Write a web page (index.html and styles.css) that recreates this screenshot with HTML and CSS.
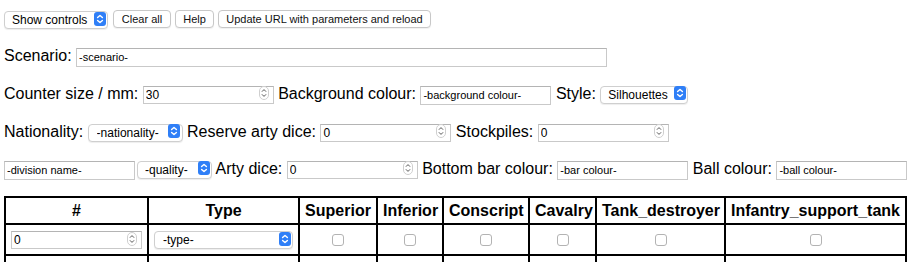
FILE: index.html
```html
<!DOCTYPE html>
<html lang="en">
<head>
    <meta charset="UTF-8">
    <title>Counters</title>
    <link rel="stylesheet" href="styles.css">
</head>
<body>
    <div class="toolbar">
        <span class="sel sel-show">
            <select><option>Show controls</option></select>
            <svg class="sel-icon" viewBox="0 0 12 14"><rect width="12" height="14" rx="3" fill="#2f7ff7"/><path d="M3.6 5.6 6 3.4 8.4 5.6M3.6 8.4 6 10.6 8.4 8.4" fill="none" stroke="#fff" stroke-width="1.4" stroke-linecap="round" stroke-linejoin="round"/></svg>
        </span>
        <button class="btn btn-clear">Clear all</button>
        <button class="btn btn-help">Help</button>
        <button class="btn btn-update">Update URL with parameters and reload</button>
    </div>

    <div class="row">Scenario: <input class="txt txt-scenario" type="text" value="-scenario-"></div>

    <div class="row">Counter size / mm: <span class="num"><input type="number" value="30"><svg class="spin" viewBox="0 0 10 14"><rect x="0.5" y="0.5" width="9" height="13" rx="4.5" fill="#fff" stroke="#cfcfcf"/><path d="M3.2 5.4 5 3.6 6.8 5.4M3.2 8.6 5 10.4 6.8 8.6" fill="none" stroke="#555" stroke-width="1" stroke-linecap="round" stroke-linejoin="round"/></svg></span> Background colour: <input class="txt" type="text" value="-background colour-"> Style: <span class="sel sel-style">
            <select><option>Silhouettes</option></select>
            <svg class="sel-icon" viewBox="0 0 12 14"><rect width="12" height="14" rx="3" fill="#2f7ff7"/><path d="M3.6 5.6 6 3.4 8.4 5.6M3.6 8.4 6 10.6 8.4 8.4" fill="none" stroke="#fff" stroke-width="1.4" stroke-linecap="round" stroke-linejoin="round"/></svg>
        </span></div>

    <div class="row">Nationality: <span class="sel sel-nat">
            <select><option>-nationality-</option></select>
            <svg class="sel-icon" viewBox="0 0 12 14"><rect width="12" height="14" rx="3" fill="#2f7ff7"/><path d="M3.6 5.6 6 3.4 8.4 5.6M3.6 8.4 6 10.6 8.4 8.4" fill="none" stroke="#fff" stroke-width="1.4" stroke-linecap="round" stroke-linejoin="round"/></svg>
        </span> Reserve arty dice: <span class="num"><input type="number" value="0"><svg class="spin" viewBox="0 0 10 14"><rect x="0.5" y="0.5" width="9" height="13" rx="4.5" fill="#fff" stroke="#cfcfcf"/><path d="M3.2 5.4 5 3.6 6.8 5.4M3.2 8.6 5 10.4 6.8 8.6" fill="none" stroke="#555" stroke-width="1" stroke-linecap="round" stroke-linejoin="round"/></svg></span> Stockpiles: <span class="num"><input type="number" value="0"><svg class="spin" viewBox="0 0 10 14"><rect x="0.5" y="0.5" width="9" height="13" rx="4.5" fill="#fff" stroke="#cfcfcf"/><path d="M3.2 5.4 5 3.6 6.8 5.4M3.2 8.6 5 10.4 6.8 8.6" fill="none" stroke="#555" stroke-width="1" stroke-linecap="round" stroke-linejoin="round"/></svg></span></div>

    <div class="row"><input class="txt txt-division" type="text" value="-division name-"><span class="sel sel-quality">
            <select><option>-quality-</option></select>
            <svg class="sel-icon" viewBox="0 0 12 14"><rect width="12" height="14" rx="3" fill="#2f7ff7"/><path d="M3.6 5.6 6 3.4 8.4 5.6M3.6 8.4 6 10.6 8.4 8.4" fill="none" stroke="#fff" stroke-width="1.4" stroke-linecap="round" stroke-linejoin="round"/></svg>
        </span> Arty dice: <span class="num"><input type="number" value="0"><svg class="spin" viewBox="0 0 10 14"><rect x="0.5" y="0.5" width="9" height="13" rx="4.5" fill="#fff" stroke="#cfcfcf"/><path d="M3.2 5.4 5 3.6 6.8 5.4M3.2 8.6 5 10.4 6.8 8.6" fill="none" stroke="#555" stroke-width="1" stroke-linecap="round" stroke-linejoin="round"/></svg></span> Bottom bar colour: <input class="txt" type="text" value="-bar colour-"> Ball colour: <input class="txt" type="text" value="-ball colour-"></div>

    <table class="units">
        <colgroup>
            <col style="width: 143px">
            <col style="width: 151px">
            <col style="width: 78px">
            <col style="width: 66px">
            <col style="width: 86px">
            <col style="width: 67px">
            <col style="width: 129px">
            <col style="width: 181px">
        </colgroup>
        <tr>
            <th>#</th>
            <th>Type</th>
            <th>Superior</th>
            <th>Inferior</th>
            <th>Conscript</th>
            <th>Cavalry</th>
            <th>Tank_destroyer</th>
            <th>Infantry_support_tank</th>
        </tr>
        <tr>
            <td><span class="num"><input type="number" value="0"><svg class="spin" viewBox="0 0 10 14"><rect x="0.5" y="0.5" width="9" height="13" rx="4.5" fill="#fff" stroke="#cfcfcf"/><path d="M3.2 5.4 5 3.6 6.8 5.4M3.2 8.6 5 10.4 6.8 8.6" fill="none" stroke="#555" stroke-width="1" stroke-linecap="round" stroke-linejoin="round"/></svg></span></td>
            <td><span class="sel sel-type">
                <select><option>-type-</option></select>
                <svg class="sel-icon" viewBox="0 0 12 14"><rect width="12" height="14" rx="3" fill="#2f7ff7"/><path d="M3.6 5.6 6 3.4 8.4 5.6M3.6 8.4 6 10.6 8.4 8.4" fill="none" stroke="#fff" stroke-width="1.4" stroke-linecap="round" stroke-linejoin="round"/></svg>
            </span></td>
            <td><input class="chk" type="checkbox"></td>
            <td><input class="chk" type="checkbox"></td>
            <td><input class="chk" type="checkbox"></td>
            <td><input class="chk" type="checkbox"></td>
            <td><input class="chk" type="checkbox"></td>
            <td><input class="chk" type="checkbox"></td>
        </tr>
        <tr>
            <td>&nbsp;</td>
            <td>&nbsp;</td>
            <td>&nbsp;</td>
            <td>&nbsp;</td>
            <td>&nbsp;</td>
            <td>&nbsp;</td>
            <td>&nbsp;</td>
            <td>&nbsp;</td>
        </tr>
    </table>
</body>
</html>
```

FILE: styles.css
```css
body {
    margin: 0;
    padding: 10px 4px 0 4px;
    font-family: "Liberation Sans", Arial, Helvetica, sans-serif;
    font-size: 16px;
    color: #000;
    background: #fff;
}

/* top buttons */
.toolbar {
    display: flex;
    gap: 4px;
    height: 18px;
    margin-bottom: 18px;
}

.btn {
    height: 18px;
    padding: 0;
    font-family: "Liberation Sans", Arial, sans-serif;
    font-size: 11px;
    color: #111;
    background: #fff;
    border: 1px solid #c8c8c8;
    border-radius: 4px;
    box-shadow: 0 1px 1px rgba(0, 0, 0, 0.06);
}
.btn-clear { width: 58px; margin-left: 1px; }
.btn-help { width: 39px; }
.btn-update { width: 213px; }

/* rows of fields */
.row {
    height: 19px;
    line-height: 19px;
    margin-bottom: 19px;
    white-space: nowrap;
}
.row:nth-of-type(5) { margin-top: -1px; margin-bottom: 18px; }

.txt {
    box-sizing: border-box;
    width: 131px;
    height: 19px;
    padding: 0 2px;
    margin: 0;
    font-family: "Liberation Sans", Arial, sans-serif;
    font-size: 11px;
    color: #000;
    border: 1px solid #c9c9c9;
    border-top-color: #b4b4b4;
    border-radius: 0;
    outline: none;
    vertical-align: baseline;
}
.txt-scenario { width: 531px; }

/* number inputs with mac-like spinner */
.num {
    position: relative;
    display: inline-block;
    vertical-align: baseline;
}
.num input {
    box-sizing: border-box;
    width: 131px;
    height: 18px;
    padding: 0 14px 0 2px;
    margin: 0;
    font-family: "Liberation Sans", Arial, sans-serif;
    font-size: 12px;
    color: #000;
    border: 1px solid #c9c9c9;
    border-top-color: #b4b4b4;
    outline: none;
    -moz-appearance: textfield;
}
.num input::-webkit-inner-spin-button,
.num input::-webkit-outer-spin-button {
    -webkit-appearance: none;
    margin: 0;
}
.spin {
    position: absolute;
    right: 5px;
    top: 2px;
    width: 10px;
    height: 14px;
}

/* selects */
.sel {
    position: relative;
    display: inline-block;
    vertical-align: baseline;
}
.sel select {
    -webkit-appearance: none;
    appearance: none;
    box-sizing: border-box;
    height: 18px;
    padding: 0 16px 0 7px;
    margin: 0;
    font-family: "Liberation Sans", Arial, sans-serif;
    font-size: 12px;
    color: #000;
    background: #fff;
    border: 1px solid #cfcfcf;
    border-radius: 4px;
    box-shadow: 0 1px 1px rgba(0, 0, 0, 0.07);
    outline: none;
}
.sel-icon {
    position: absolute;
    right: 2px;
    top: 2px;
    width: 12px;
    height: 14px;
    pointer-events: none;
}
.sel-show select { width: 104px; }
.sel-style select { width: 88px; }
.sel-nat select { width: 95px; padding-left: 8px; }
.sel-nat .sel-icon { right: 3px; }
.sel-quality select { width: 75px; }
.sel-quality { margin-left: 2px; }
.sel-type select { width: 139px; padding-left: 8px; }

/* table */
.units {
    table-layout: fixed;
    border-collapse: collapse;
    width: 901px;
}
.units th,
.units td {
    border: 2px solid #000;
    padding: 0 5px;
    text-align: center;
    white-space: nowrap;
}
.units th {
    height: 25px;
    font-weight: bold;
}
.units td {
    height: 29px;
}
.units td:first-child,
.units td:nth-child(2) {
    text-align: left;
}

.chk {
    -webkit-appearance: none;
    appearance: none;
    box-sizing: border-box;
    width: 12px;
    height: 12px;
    margin: 0;
    vertical-align: middle;
    background: #fff;
    border: 1px solid #b3b3b3;
    border-radius: 3px;
}
```
